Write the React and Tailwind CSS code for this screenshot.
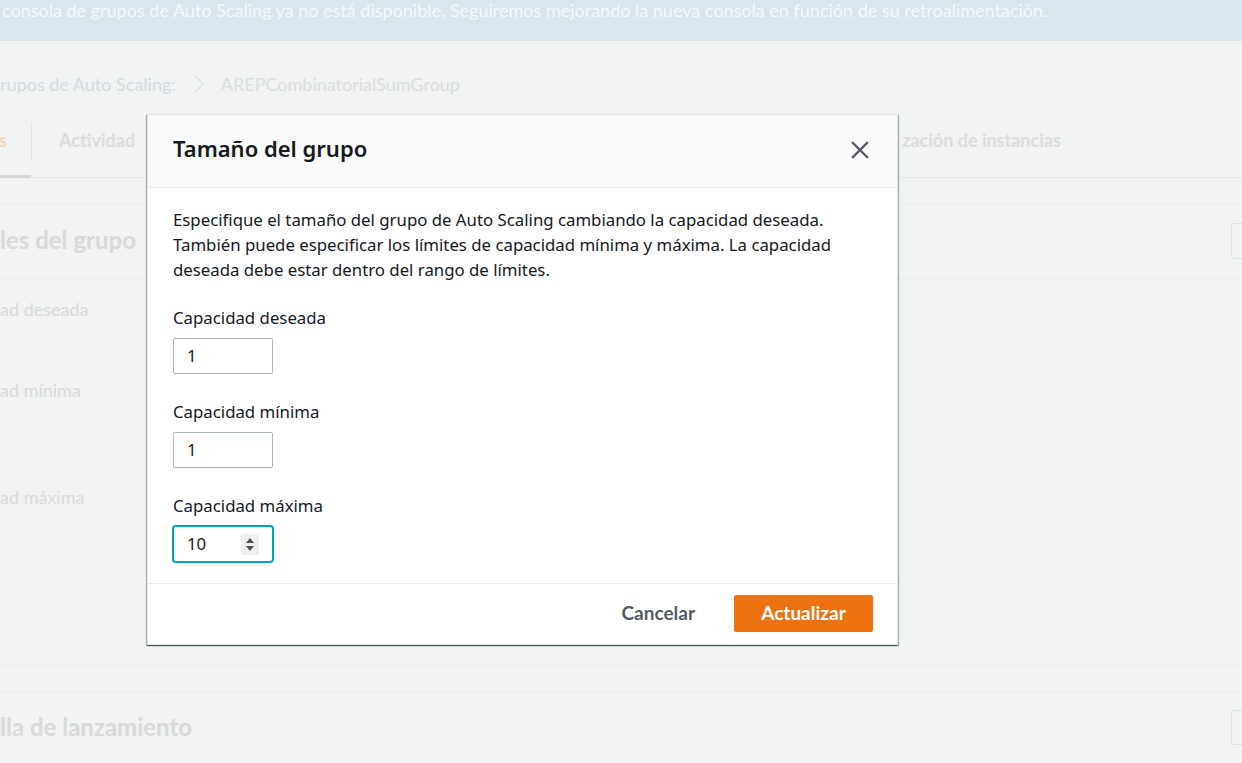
import React from 'react';

function CloseIcon() {
  return (
    <svg width="18" height="18" viewBox="0 0 18 18" fill="none">
      <path d="M2 2 L16 16 M16 2 L2 16" stroke="#545b64" strokeWidth="2.4" strokeLinecap="square" />
    </svg>
  );
}

function Spinner() {
  return (
    <div className="w-[18px] h-[21px] bg-[#efefef] flex flex-col items-center justify-center gap-[3px]">
      <svg width="8" height="5" viewBox="0 0 8 5">
        <path d="M0 5 L4 0 L8 5 Z" fill="#505050" />
      </svg>
      <svg width="8" height="5" viewBox="0 0 8 5">
        <path d="M0 0 L4 5 L8 0 Z" fill="#505050" />
      </svg>
    </div>
  );
}

function Field({ label, value, focused }) {
  return (
    <div>
      <div className="text-[16.8px] leading-[22px] text-[#16191f] mb-[9px]">{label}</div>
      {focused ? (
        <div className="w-[100px] h-[36px] rounded-[3px] border border-[#00a1c9] ring-1 ring-[#00a1c9] bg-white flex items-center pl-[13px] pr-[13px]">
          <span className="flex-1 text-[16.8px] text-[#16191f]">{value}</span>
          <Spinner />
        </div>
      ) : (
        <div className="w-[100px] h-[36px] rounded-[2px] border border-[#aab7b8] bg-white flex items-center pl-[13px]">
          <span className="text-[16.8px] text-[#16191f]">{value}</span>
        </div>
      )}
    </div>
  );
}

export default function App() {
  return (
    <div className="relative w-full h-[763px] overflow-hidden bg-[#f2f3f3] font-['Lato','Liberation_Sans',sans-serif]">
      {/* Background page (dimmed) */}
      <div className="h-[41px] bg-[#dae6ee] pl-[2px] text-[18px] leading-[20px] text-[#f6f9fb] whitespace-nowrap">
        consola de grupos de Auto Scaling ya no está disponible. Seguiremos mejorando la nueva consola en función de su retroalimentación.
      </div>

      <div className="mt-[33px] h-[20px] flex items-center text-[18px] whitespace-nowrap">
        <span className="text-[#d3dde4]">rupos de Auto Scaling:</span>
        <svg width="12" height="20" viewBox="0 0 12 20" className="ml-[17px] mr-[16px]" fill="none">
          <path d="M2 2 L10 10 L2 18" stroke="#e0e3e3" strokeWidth="1.4" />
        </svg>
        <span className="text-[#dcdfdf]">AREPCombinatorialSumGroup</span>
      </div>

      <div className="mt-[21px] h-[63px] border-b border-[#e6e8e8] flex items-stretch text-[18px] font-bold whitespace-nowrap">
        <div className="w-[31px] flex items-center pb-[10px] border-b-[3px] border-[#d8dada] -mb-px text-[#f6d6bf]">
          <span className="-ml-[1px]">s</span>
        </div>
        <div className="flex items-center pb-[11px]">
          <div className="w-px h-[37px] bg-[#e3e5e5]" />
        </div>
        <div className="pl-[27px] pb-[11px] flex items-center text-[#dcdede]">Actividad</div>
        <div className="pl-[767px] pb-[11px] flex items-center text-[#dcdede]">zación de instancias</div>
      </div>

      <section className="mt-[25px] border-t border-b border-[#eaecec]">
        <div className="h-[75px] border-b border-[#eaecec] flex items-center justify-between">
          <h2 className="text-[24px] font-bold text-[#d9dada] -mt-[2px]">les del grupo</h2>
          <div className="w-[20px] h-[36px] -mr-[9px] rounded-[3px] border border-[#dfe2e2]" />
        </div>
        <div className="h-[386px] text-[18px] text-[#d9dbdb]">
          <div className="pt-[19px] leading-[22px]">ad deseada</div>
          <div className="pt-[59px] leading-[22px]">ad mínima</div>
          <div className="pt-[85px] leading-[22px]">ad máxima</div>
        </div>
      </section>

      <section className="mt-[25px] border-t border-[#eaecec]">
        <div className="h-[70px] flex items-center justify-between">
          <h2 className="text-[24px] font-bold text-[#d9dada]">lla de lanzamiento</h2>
          <div className="w-[20px] h-[35px] -mr-[9px] rounded-[3px] border border-[#dfe2e2]" />
        </div>
      </section>

      {/* Modal */}
      <div className="absolute left-[147px] top-[114px] w-[751px] bg-white border border-[#e1e4e4] shadow-[0_1px_1px_0_rgba(0,28,36,0.45),1px_1px_1px_0_rgba(0,28,36,0.25),-1px_1px_1px_0_rgba(0,28,36,0.25)] font-['Noto_Sans','Open_Sans',sans-serif]">
        <div className="h-[73px] bg-[#fafafa] border-b border-[#eaeded] flex items-center justify-between pl-[25px] pr-[28px]">
          <h1 className="text-[22px] font-semibold text-[#16191f] -mt-[5px]">Tamaño del grupo</h1>
          <button className="w-[18px] h-[18px] flex items-center justify-center -mt-[3px]">
            <CloseIcon />
          </button>
        </div>

        <div className="pt-[19px] pb-[21px] pl-[25px] pr-[24px]">
          <p className="text-[16.8px] leading-[25px] text-[#16191f] mb-[25px]">
            Especifique el tamaño del grupo de Auto Scaling cambiando la capacidad deseada. También puede especificar los límites de capacidad mínima y máxima. La capacidad deseada debe estar dentro del rango de límites.
          </p>
          <div className="flex flex-col gap-[27px]">
            <Field label="Capacidad deseada" value="1" />
            <Field label="Capacidad mínima" value="1" />
            <Field label="Capacidad máxima" value="10" focused />
          </div>
        </div>

        <div className="h-[61px] border-t border-[#eaeded] flex items-center justify-end pr-[24px] font-['Lato','Liberation_Sans',sans-serif]">
          <button className="text-[19px] font-bold text-[#545b64] mr-[39px] -mt-[2px]">Cancelar</button>
          <button className="w-[139px] h-[37px] -mt-[2px] rounded-[2px] bg-[#ec7211] text-white text-[19px] font-bold flex items-center justify-center">
            Actualizar
          </button>
        </div>
      </div>
    </div>
  );
}
